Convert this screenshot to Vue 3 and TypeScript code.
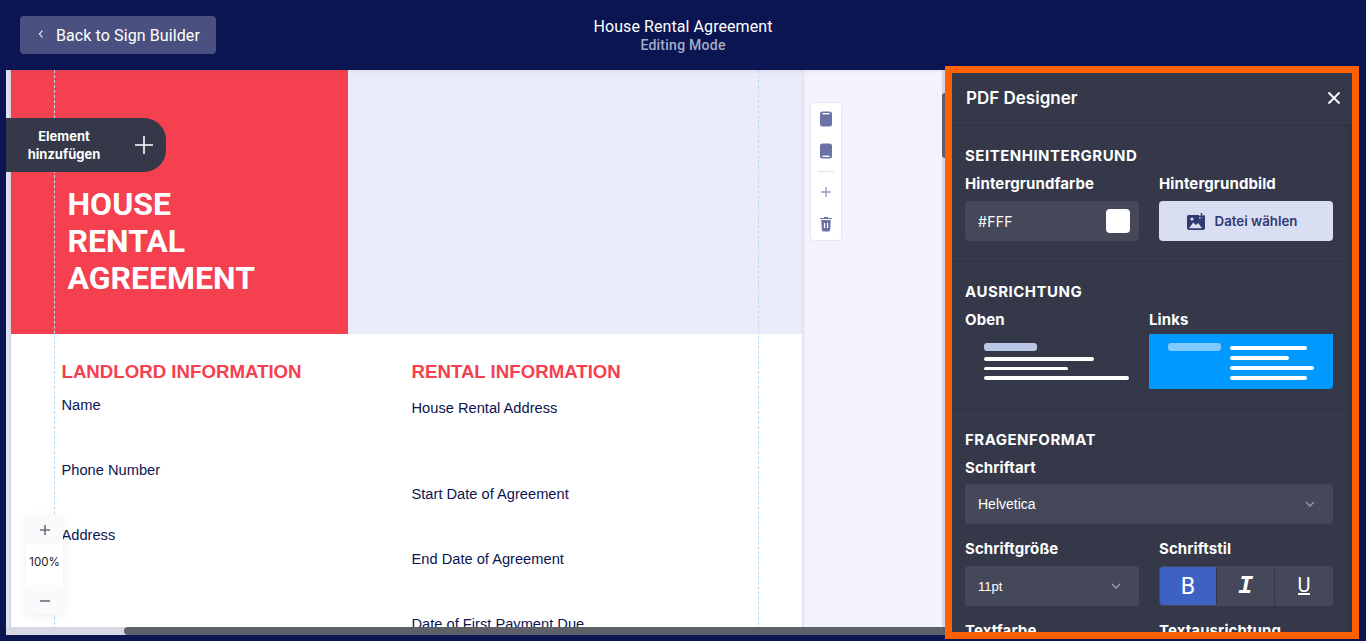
<script setup lang="ts">
const leftFields: string[] = ['Name', 'Phone Number', 'Address']
const rightFields: string[] = ['Start Date of Agreement', 'End Date of Agreement', 'Date of First Payment Due']
</script>

<template>
  <div class="app">
    <header class="topbar">
      <button class="back">
        <svg width="6" height="10" viewBox="0 0 6 10" class="back-ic"><path d="M4.500 1.500 1.500 5l3 3.500" fill="none" stroke="#fff" stroke-width="1.100"/></svg>
        <span class="back-label">Back to Sign Builder</span>
      </button>
      <div class="title">
        <div class="t1">House Rental Agreement</div>
        <div class="t2">Editing Mode</div>
      </div>
    </header>

    <main class="main">
      <div class="canvas">
        <div class="scroller">
          <div class="page">
            <div class="hero">
              <div class="hero-red">
                <h1>HOUSE<br />RENTAL<br />AGREEMENT</h1>
              </div>
              <div class="hero-rest"></div>
            </div>
            <div class="cols">
              <div class="col col-l">
                <h2>LANDLORD INFORMATION</h2>
                <div v-for="f in leftFields" :key="f" class="field">{{ f }}</div>
              </div>
              <div class="col col-r">
                <h2>RENTAL INFORMATION</h2>
                <div class="field first">House Rental Address</div>
                <div v-for="f in rightFields" :key="f" class="field">{{ f }}</div>
              </div>
            </div>
            <i class="guide g1"></i>
            <i class="guide g2"></i>
          </div>

          <div class="tools">
            <svg width="14" height="16" viewBox="0 0 14 16" class="tool"><rect x="1" y="0.500" width="12" height="15" rx="2.500" fill="#6b72a8"/><rect x="3.500" y="2" width="7" height="1.400" fill="#fff"/></svg>
            <svg width="14" height="16" viewBox="0 0 14 16" class="tool"><rect x="1" y="0.500" width="12" height="15" rx="2.500" fill="#6b72a8"/><rect x="3.500" y="12.600" width="7" height="1.400" fill="#fff"/></svg>
            <div class="tool-sep"></div>
            <svg width="12" height="12" viewBox="0 0 12 12" class="tool tool-plus"><path d="M6 1v10M1 6h10" stroke="#9a9fc5" stroke-width="1.400"/></svg>
            <svg width="14" height="16" viewBox="0 0 14 16" class="tool tool-trash"><path d="M1 2h12v1H1z" fill="#6b72a8"/><path d="M5 1h4v1H5z" fill="#6b72a8"/><path d="M2.200 4h9.600l-.6 10a1.500 1.500 0 0 1-1.500 1.400H4.300A1.500 1.500 0 0 1 2.800 14z" fill="#6b72a8"/><path d="M5.500 7v5M8.500 7v5" stroke="#fff" stroke-width="1.200"/></svg>
          </div>
          <i class="top-shade"></i>
        </div>

        <button class="add">
          <span class="add-text">Element<br />hinzufügen</span>
          <svg width="20" height="20" viewBox="0 0 20 20"><path d="M10 1v18M1 10h18" stroke="#fff" stroke-width="1.600"/></svg>
        </button>

        <div class="zoom">
          <div class="zbtn"><svg width="12" height="12" viewBox="0 0 12 12"><path d="M6 1v10M1 6h10" stroke="#6c6e75" stroke-width="1.600"/></svg></div>
          <div class="zval">100%</div>
          <div class="zbtn"><svg width="12" height="12" viewBox="0 0 12 12"><path d="M1 6h10" stroke="#6c6e75" stroke-width="1.600"/></svg></div>
        </div>

        <div class="vbar"><i class="vthumb"></i></div>
        <div class="hbar"><i class="hthumb"></i></div>
      </div>
    </main>

    <aside class="panel">
      <div class="p-head">
        <span>PDF Designer</span>
        <svg width="14" height="14" viewBox="0 0 14 14"><path d="M1.500 1.500l11 11M12.500 1.500l-11 11" stroke="#fff" stroke-width="1.800"/></svg>
      </div>
      <div class="p-body">
        <section class="sec sec1">
          <h3>SEITENHINTERGRUND</h3>
          <div class="two">
            <div>
              <label>Hintergrundfarbe</label>
              <div class="input color">
                <span>#FFF</span>
                <i class="swatch"></i>
              </div>
            </div>
            <div>
              <label>Hintergrundbild</label>
              <button class="file">
                <svg width="19" height="17" viewBox="0 0 19 17"><path d="M1.500 2H12v3.500h3.500V2.500H18V15a2 2 0 0 1-2 2H2a2 2 0 0 1-2-2V3.500A1.500 1.500 0 0 1 1.500 2z" fill="#2f3a72"/><path d="M2 15.200l4.200-5.700 2.800 2.600 2.200-2.100 3.800 5.200z" fill="#dadef2"/><circle cx="5" cy="6" r="1.600" fill="#dadef2"/><path d="M14.500 0v7M11 3.500h7" stroke="#2f3a72" stroke-width="1.600"/></svg>
                <span>Datei wählen</span>
              </button>
            </div>
          </div>
        </section>

        <section class="sec sec2">
          <h3>AUSRICHTUNG</h3>
          <div class="two align">
            <div>
              <label>Oben</label>
              <div class="opt opt-top">
                <i class="pill"></i>
                <i class="ln w110"></i>
                <i class="ln w84"></i>
                <i class="ln w145"></i>
              </div>
            </div>
            <div>
              <label>Links</label>
              <div class="opt opt-left">
                <i class="pill"></i>
                <div class="lines">
                  <i class="ln w77"></i>
                  <i class="ln w59"></i>
                  <i class="ln w84"></i>
                  <i class="ln w77"></i>
                </div>
              </div>
            </div>
          </div>
        </section>

        <section class="sec sec3">
          <h3>FRAGENFORMAT</h3>
          <label>Schriftart</label>
          <div class="input select font14">
            <span>Helvetica</span>
            <svg width="10" height="6" viewBox="0 0 10 6"><path d="M1 1l4 4 4-4" fill="none" stroke="#9a9dac" stroke-width="1.300"/></svg>
          </div>
          <div class="two row3">
            <div>
              <label>Schriftgröße</label>
              <div class="input select">
                <span>11pt</span>
                <svg width="10" height="6" viewBox="0 0 10 6"><path d="M1 1l4 4 4-4" fill="none" stroke="#9a9dac" stroke-width="1.300"/></svg>
              </div>
            </div>
            <div>
              <label>Schriftstil</label>
              <div class="style">
                <div class="sbtn on"><span class="b">B</span></div>
                <div class="sbtn"><span class="it">I</span></div>
                <div class="sbtn"><span class="u">U</span></div>
              </div>
            </div>
          </div>
          <div class="two row4">
            <label>Textfarbe</label>
            <label>Textausrichtung</label>
          </div>
        </section>
      </div>
    </aside>
  </div>
</template>

<style>
html, body { margin: 0; background: #0a1551; overflow: hidden; }
</style>

<style scoped>
.app { position: relative; height: 641px; background: #0a1551; overflow: hidden; font-family: Roboto, sans-serif; }
.topbar { height: 70px; display: flex; align-items: center; padding-left: 20px; position: relative; }
.back { width: 196px; height: 38px; margin-top: -1px; background: #4a5180; border: 0; border-radius: 4px; color: #fff; font: 400 16px Roboto, sans-serif; letter-spacing: .1px; display: flex; align-items: center; gap: 12px; padding: 0 0 0 18px; }
.back-label { position: relative; top: 1px; }
.back-ic { margin-top: -1px; }
.title { position: absolute; left: 0; right: 0; top: 17px; text-align: center; }
.t1 { color: #fff; font-size: 16px; letter-spacing: .08px; line-height: 20px; }
.t2 { color: #a6abc8; font-size: 14px; letter-spacing: .25px; line-height: 17px; font-weight: 500; }

.main { height: 565px; padding-left: 6px; }
.canvas { position: relative; width: 939px; height: 565px; overflow: hidden; background: #f3f3fe; }
.scroller { position: relative; height: 557px; overflow: hidden; display: flex; padding-left: 5px; background: linear-gradient(90deg, #e3e4f3 0, #e3e4f3 5px, #f3f3fe 5px); }
.top-shade { position: absolute; left: 0; right: 0; top: 0; height: 4px; background: linear-gradient(rgba(60,60,100,.07), rgba(60,60,100,0)); pointer-events: none; }
.page { position: relative; width: 791px; flex: none; background: #fff; box-shadow: 0 0 4px rgba(60,60,100,.25); height: 700px; }
.hero { display: flex; height: 264px; }
.hero-red { width: 337px; background: #f4404f; padding: 116px 0 0 56.500px; box-sizing: border-box; }
.hero-rest { flex: 1; background: #e9ebf9; }
h1 { margin: 0; color: #fff; font: 700 32px/36.800px Roboto, sans-serif; }
.cols { display: grid; grid-template-columns: 350px 1fr; padding: 25px 0 0 50.500px; font-family: "Liberation Sans", Arial, sans-serif; }
h2 { margin: 0; color: #f4404f; font: 700 18.670px/25px "Liberation Sans", Arial, sans-serif; }
.field { color: #0a1551; font-size: 14.670px; line-height: 17px; }
.col-l .field { margin-top: 48px; }
.col-l .field:nth-of-type(1) { margin-top: 13px; }
.col-r .field { margin-top: 48px; }
.col-r .field.first { margin-top: 16px; }
.col-r .field:nth-of-type(2) { margin-top: 69px; }
.guide { position: absolute; top: 0; bottom: 0; border-left: 1px dashed #b9d9f0; }
.g1 { left: 43px; }
.g2 { left: 747px; }

.tools { position: relative; margin: 32px 0 0 8px; width: 32px; height: 139px; box-sizing: border-box; flex: none; background: #fff; border: 1px solid #e6e7f6; border-radius: 4px; display: flex; flex-direction: column; align-items: center; padding-top: 8px; }
.tool { display: block; }
.tool + .tool { margin-top: 16px; }
.tool-sep { width: 16px; height: 1px; background: #dfe0ef; margin: 12px 0 14px; }
.tool-sep + .tool { margin-top: 0; }
.tool-plus + .tool-trash { margin-top: 18px; }

.add { position: absolute; left: 0; top: 48px; width: 160px; height: 54px; border: 0; padding: 0 12px 0 0; background: #343849; border-radius: 0 22px 22px 0; color: #fff; display: flex; align-items: center; justify-content: space-between; }
.add-text { width: 116px; text-align: center; font: 700 13px/18px Inter, sans-serif; }

.zoom { position: absolute; left: 20px; top: 446px; width: 37px; height: 98px; background: #fff; border-radius: 4px; box-shadow: 0 2px 10px rgba(40,40,80,.08); display: flex; flex-direction: column; }
.zbtn { height: 29px; background: #fafafc; display: flex; align-items: center; justify-content: center; border-radius: 4px; }
.zbtn:last-child { padding-top: 2px; box-sizing: border-box; }
.zbtn:first-child { padding-bottom: 2px; box-sizing: border-box; }
.zval { flex: 1; display: flex; align-items: center; justify-content: center; padding-bottom: 6px; color: #1b1b25; font: 400 11.500px Inter, sans-serif; }

.vbar { position: absolute; right: 0; top: 0; bottom: 8px; width: 3px; background: #d5d5e3; }
.vthumb { position: absolute; top: 23px; left: 0; width: 3px; height: 65px; background: #5d6067; border-radius: 3px 0 0 3px; }
.hbar { position: absolute; left: 0; right: 0; bottom: 0; height: 8px; background: #d8d8e4; }
.hthumb { position: absolute; left: 118px; right: 0; top: 0; height: 8px; background: #5d6067; border-radius: 4px 0 0 4px; }

.panel { position: absolute; left: 945px; top: 66px; width: 414px; height: 573px; box-sizing: border-box; border: 7px solid #ff6100; background: #343849; color: #fff; font-family: Inter, sans-serif; overflow: hidden; display: flex; flex-direction: column; }
.p-head { height: 53px; flex: none; box-sizing: border-box; border-bottom: 1px solid #2c3040; display: flex; align-items: center; justify-content: space-between; padding: 0 11px 2px 14px; font-weight: 600; font-size: 17px; }
.p-body { flex: 1; overflow: hidden; border-right: 4px solid #2f3342; }
.sec { padding: 0 15px 0 13px; border-bottom: 1px solid #2c3040; box-sizing: border-box; }
.sec1 { height: 136px; padding-top: 21px; }
.sec2 { height: 148px; padding-top: 21px; }
.sec3 { padding-top: 21px; border-bottom: 0; }
h3 { margin: 0; font: 700 15px/18px Inter, sans-serif; letter-spacing: .5px; color: #fff; }
label { display: block; font: 700 15px/18px Inter, sans-serif; letter-spacing: .1px; color: #fff; }
.two { display: grid; grid-template-columns: 174px 174px; column-gap: 20px; margin-top: 10px; }
.sec1 .two label { margin-bottom: 8px; }
.input { height: 40px; background: #444859; border-radius: 4px; box-sizing: border-box; display: flex; align-items: center; justify-content: space-between; padding: 0 13px; font: 400 13px "Liberation Sans", Arial, sans-serif; color: #fff; }
.font14 { font-size: 14px; }
.color { padding-right: 9px; font: 400 14px Inter, sans-serif; letter-spacing: .3px; }
.swatch { width: 24px; height: 24px; background: #fff; border-radius: 4px; display: block; }
.file { width: 174px; height: 40px; border: 0; border-radius: 4px; background: #dadef2; color: #2f3a72; display: flex; align-items: center; justify-content: center; gap: 9px; font: 600 13.300px Inter, sans-serif; padding: 0 8px 0 0; }
.align { grid-template-columns: 174px 184px; column-gap: 10px; margin-top: 10px; }
.align label { margin-bottom: 5px; }
.opt { height: 55px; box-sizing: border-box; position: relative; }
.pill { display: block; width: 53px; height: 8px; border-radius: 3px; background: #b8c7e6; }
.ln { display: block; height: 3.500px; border-radius: 2px; background: #fff; }
.w110 { width: 110px; }
.w84 { width: 84px; }
.w145 { width: 145px; }
.w77 { width: 77px; }
.w59 { width: 59px; }
.opt-top { padding: 9px 0 0 19px; }
.opt-top .pill { margin-bottom: 6px; }
.opt-top .ln + .ln { margin-top: 6px; }
.opt-left { background: #0099ff; border-radius: 0 0 4px 0; display: flex; padding: 9px 0 0 19px; }
.opt-left .pill { background: #80c9ff; }
.lines { margin: 3px 0 0 9px; }
.lines .ln + .ln { margin-top: 6.500px; }
.sec3 > label { margin-top: 10px; margin-bottom: 7px; }
.select.input { padding-right: 18px; }
.row3 { margin-top: 16px; }
.row3 label { margin-bottom: 8px; }
.style { height: 40px; background: #444859; border-radius: 4px; display: grid; grid-template-columns: 58px 58px 58px; overflow: hidden; }
.sbtn { display: flex; align-items: center; justify-content: center; border-right: 1px solid #343849; color: #fff; }
.sbtn:last-child { border-right: 0; }
.sbtn.on { background: #3e62c4; margin: 1px 0 1px 1px; border-radius: 3px 0 0 3px; }
.b { font: 400 23px Roboto, sans-serif; }
.it { font: italic 700 25px "Liberation Mono", monospace; }
.u { font: 400 20px Roboto, sans-serif; border-bottom: 2px solid #fff; line-height: 16px; padding: 0; }
.row4 { margin-top: 16px; }
</style>
